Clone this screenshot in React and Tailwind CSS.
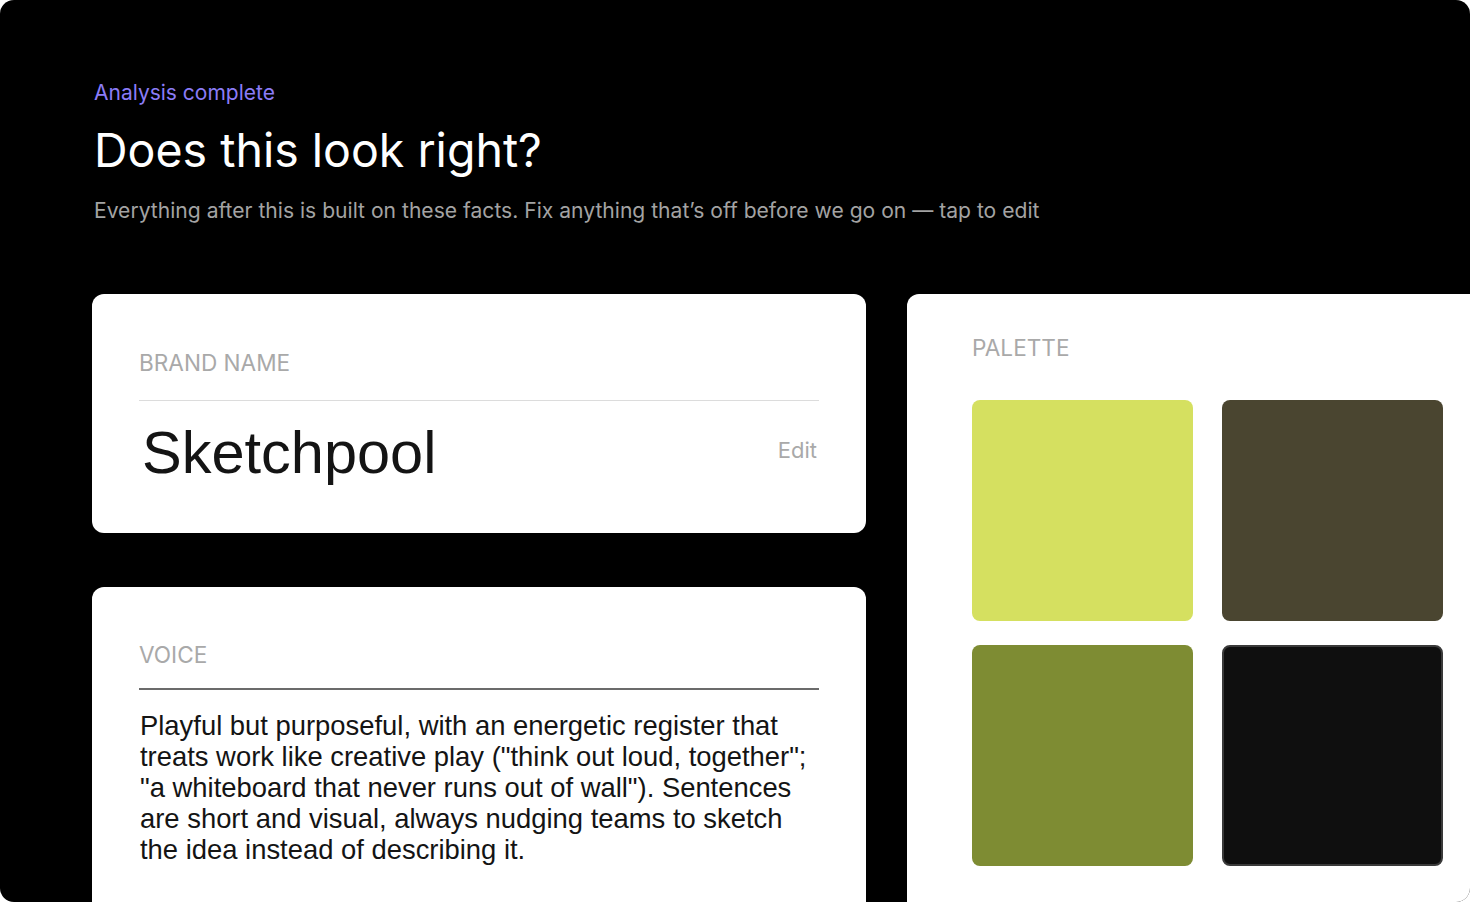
const swatches = [
  { hex: "#d5e060", border: false },
  { hex: "#4a4530", border: false },
  { hex: "#7e8c33", border: false },
  { hex: "#0f0f0f", border: true },
];

function Label({ children }) {
  return (
    <div className="text-[22.6px] leading-[28px] uppercase text-[#a9a9a9] font-['Inter',sans-serif]">
      {children}
    </div>
  );
}

export default function App() {
  return (
    <div className="h-[902px] w-[1470px] bg-white">
      <div className="h-full overflow-hidden rounded-[14px] bg-black pl-[92px] pt-[79px] font-['Inter',sans-serif]">
        <div className="pl-[2px]">
          <div className="text-[21px] leading-[28px] text-[#8b7cf7]">Analysis complete</div>
          <h1 className="mt-[14px] text-[46.5px] leading-[58px] font-normal text-white">
            Does this look right?
          </h1>
          <p className="mt-[18px] text-[21.1px] leading-[28px] text-[#a3a3a3]">
            Everything after this is built on these facts. Fix anything that’s off before we go on — tap to edit
          </p>
        </div>

        <div className="mt-[69px] flex gap-[41px]">
          <div className="flex w-[774px] shrink-0 flex-col gap-[54px]">
            <section className="rounded-[12px] bg-white px-[47px] pt-[55px] pb-[46px]">
              <Label>Brand name</Label>
              <div className="mt-[23px] flex items-center justify-between border-t border-[#dcdcdc] pt-[17px]">
                <div className="pl-[3px] text-[59.5px] leading-[69px] text-[#141414] font-['Liberation_Sans',Arial,sans-serif]">
                  Sketchpool
                </div>
                <button className="mb-[6px] pr-[2px] text-[22px] leading-[28px] text-[#a9a9a9]">Edit</button>
              </div>
            </section>

            <section className="rounded-[12px] bg-white px-[47px] pt-[54px] pb-[60px]">
              <Label>Voice</Label>
              <div className="mt-[19px] border-t-2 border-[#6b6b6b] pt-[20px]">
                <p className="pl-[1px] text-[27.4px] leading-[31px] text-[#141414] font-['Liberation_Sans',Arial,sans-serif]">
                  Playful but purposeful, with an energetic register that treats work like creative play ("think out loud, together"; "a whiteboard that never runs out of wall"). Sentences are short and visual, always nudging teams to sketch the idea instead of describing it.
                </p>
              </div>
            </section>
          </div>

          <section className="w-[601px] shrink-0 rounded-[12px] bg-white px-[65px] pt-[40px] pb-[60px]">
            <Label>Palette</Label>
            <div className="mt-[38px] grid grid-cols-[221px_221px] gap-x-[29px] gap-y-[24px]">
              {swatches.map((s) => (
                <div
                  key={s.hex}
                  className={`h-[221px] w-[221px] rounded-[8px] ${s.border ? "border-2 border-[#3a3a3a]" : ""}`}
                  style={{ backgroundColor: s.hex }}
                />
              ))}
            </div>
          </section>
        </div>
      </div>
    </div>
  );
}
